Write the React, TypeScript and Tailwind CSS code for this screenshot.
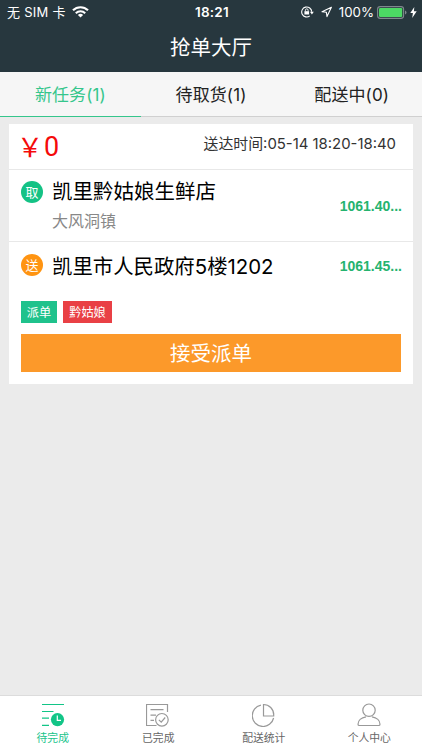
import React from "react";

const GREEN = "#19c48b";

function StatusBar() {
  return (
    <div className="flex h-[24px] items-center pl-[7px] pr-[5px] text-white">
      <div className="flex flex-1 items-center gap-[6px]">
        <span className="text-[13px] leading-6 tracking-[0.25px] whitespace-nowrap">无 SIM 卡</span>
        <svg width="17" height="12" viewBox="0 0 17 12" fill="none" stroke="white">
          <path d="M1 4.3a10.8 10.8 0 0 1 15 0" strokeWidth="2.2" />
          <path d="M3.8 7.2a6.8 6.8 0 0 1 9.4 0" strokeWidth="2.1" />
          <path d="M8.5 11.6 5.9 9a3.8 3.8 0 0 1 5.2 0z" fill="white" stroke="none" />
        </svg>
      </div>
      <span className="text-[13.5px] font-semibold leading-6 tracking-[0.2px]">18:21</span>
      <div className="flex flex-1 items-center justify-end">
        <svg width="13" height="12" viewBox="0 0 13 12" fill="none" stroke="white" strokeWidth="1.1">
          <path d="M10.7 5.8A5 5 0 1 0 8.8 9.9" />
          <path d="M8.9 5.8h3.9l-1.9 2.6z" fill="white" stroke="none" />
          <path d="M3.4 5.2h4.7v3.3H3.4z" fill="white" stroke="none" />
          <path d="M4.4 5.4V4.2a1.35 1.35 0 0 1 2.7 0v1.2" strokeWidth=".9" />
        </svg>
        <svg className="ml-[7px]" width="12" height="12" viewBox="0 0 12 12" fill="none" stroke="white" strokeWidth="1.1">
          <path d="M10.4 1.2 1 5.7l4.4.6.6 4.3z" strokeLinejoin="round" />
        </svg>
        <span className="ml-[6px] text-[13.3px] leading-6">100%</span>
        <svg className="ml-[3px]" width="30" height="13" viewBox="0 0 30 13">
          <rect x=".6" y=".6" width="26" height="11.8" rx="2.6" fill="none" stroke="#7f898d" strokeWidth="1.1" />
          <rect x="2" y="2" width="23.2" height="9" rx="1.2" fill="#4cd964" />
          <path d="M28 4.4q1.5.5 1.5 2.1T28 8.6z" fill="#7f898d" />
        </svg>
        <svg className="ml-[3px]" width="7" height="11" viewBox="0 0 7 11">
          <path d="M4.3 0 .3 6.1h2.6L2.2 11l4.5-6.7H3.9z" fill="white" />
        </svg>
      </div>
    </div>
  );
}

function Tabs() {
  const tabs = ["新任务(1)", "待取货(1)", "配送中(0)"];
  return (
    <div className="flex h-[45px] bg-[#f6f6f6]">
      {tabs.map((label, i) => (
        <div
          key={label}
          className={`flex-1 border-b pt-[10px] text-center text-[17px] leading-[26px] tracking-[0.1px] ${
            i === 0 ? "border-[#35c68c] text-[#35c68c]" : "border-[#d0d0d0] text-[#222]"
          }`}
        >
          {label}
        </div>
      ))}
    </div>
  );
}

function Badge({ label, color }: { label: string; color: string }) {
  return (
    <span
      className={`flex size-[22px] shrink-0 items-center justify-center rounded-full text-[13px] leading-[22px] text-white ${color}`}
    >
      {label}
    </span>
  );
}

function Distance({ value }: { value: string }) {
  return (
    <span className="block font-['Liberation_Sans'] text-[14px] font-bold leading-5 text-[#25b36f]">
      {value}
    </span>
  );
}

function TaskCard() {
  return (
    <section className="mx-[9px] mt-[7px] h-[260px] bg-white">
      <div className="flex h-[46px] justify-between border-b border-[#e8e8e8] pl-[11px] pr-[17px]">
        <span className="flex pt-[4px] text-[27px] leading-[38px] text-[#f50a0a]">
          <span className="-ml-[3px] w-[27px] font-['Noto_Sans_CJK_SC'] text-[26px] leading-[35px]">￥</span>
          <span className="font-['Roboto']">0</span>
        </span>
        <span className="pt-[8px] text-[14.9px] leading-6 text-[#333]">送达时间:05-14 18:20-18:40</span>
      </div>
      <div className="flex h-[72px] border-b border-[#e8e8e8] pl-[12px] pr-[11px]">
        <div className="pt-[11px]">
          <Badge label="取" color="bg-[#14c285]" />
        </div>
        <div className="ml-[9px] pt-[7px]">
          <div className="text-[20.5px] leading-[30px] text-black">凯里黔姑娘生鲜店</div>
          <div className="mt-[2px] text-[16px] leading-6 text-[#888]">大风洞镇</div>
        </div>
        <div className="ml-auto pt-[26px]">
          <Distance value="1061.40..." />
        </div>
      </div>
      <div className="flex h-[59px] pl-[12px] pr-[11px]">
        <div className="pt-[12px]">
          <Badge label="送" color="bg-[#ff9411]" />
        </div>
        <div className="ml-[9px] pt-[10px] text-[20.4px] leading-[30px] text-black">凯里市人民政府5楼1202</div>
        <div className="ml-auto pt-[14px]">
          <Distance value="1061.45..." />
        </div>
      </div>
      <div className="flex gap-[6px] pl-[12px] text-[12.2px] leading-[24px] text-white">
        <span className="h-[22px] w-[36px] bg-[#1fc28c] text-center">派单</span>
        <span className="h-[22px] w-[49px] bg-[#e94045] text-center">黔姑娘</span>
      </div>
      <button className="ml-[12px] mt-[11px] block h-[38px] w-[380px] bg-[#fc992a] text-center text-[20.5px] leading-[40px] text-white">
        接受派单
      </button>
    </section>
  );
}

const pendingIcon = (
  <svg width="24" height="24" viewBox="0 0 24 24" fill="none" stroke="#12c587" strokeWidth="1.2">
    <path d="M1 1.5h22M1 8.5h11.5M1 15.2h7M1 22.4h7" />
    <circle cx="16.5" cy="16.6" r="6.6" fill="#12c587" stroke="none" />
    <path d="M16.3 12.5v4.8h3.7" stroke="white" strokeWidth="1.2" />
  </svg>
);

const doneIcon = (
  <svg width="24" height="24" viewBox="0 0 24 24" fill="none" stroke="#999" strokeWidth="1.2">
    <path d="M21.5 9V1.5h-21v21h10M4.5 6.6h13M4.5 12.2h5.5M4.5 17.4h3.5" />
    <circle cx="15.9" cy="16.8" r="6.3" />
    <path d="m12.9 16.8 2.3 2.3 4-4.6" />
  </svg>
);

const statsIcon = (
  <svg width="24" height="24" viewBox="0 0 24 24" fill="none" stroke="#999" strokeWidth="1.2">
    <path d="M8.9 2.1A10.8 10.8 0 1 0 21.6 15" />
    <path d="M11.5 1.5V13h10.2v-1.2A10.2 10.2 0 0 0 11.5 1.5z" />
  </svg>
);

const profileIcon = (
  <svg width="24" height="24" viewBox="0 0 24 24" fill="none" stroke="#999" strokeWidth="1.2">
    <circle cx="12" cy="7.2" r="6.2" />
    <path d="M9 13.8C4.2 14.6 1 17.7 1 21.2q0 1.3 1.3 1.3h19.4q1.3 0 1.3-1.3c0-3.5-3.2-6.6-8-7.4" />
  </svg>
);

function BottomNav() {
  const items = [
    { label: "待完成", icon: pendingIcon },
    { label: "已完成", icon: doneIcon },
    { label: "配送统计", icon: statsIcon },
    { label: "个人中心", icon: profileIcon },
  ];
  return (
    <nav className="mt-auto flex h-[55px] border-t border-[#dcdcdc] bg-white">
      {items.map((item, i) => (
        <div
          key={item.label}
          className="flex flex-1 flex-col items-center pt-[7px] text-[#666]"
          style={i === 0 ? { color: GREEN } : undefined}
        >
          {item.icon}
          <span className="mt-[4px] text-[10.8px] leading-4">{item.label}</span>
        </div>
      ))}
    </nav>
  );
}

export default function App() {
  return (
    <main className="flex h-[750px] w-[422px] flex-col overflow-hidden bg-[#ebebeb] font-['Inter','Noto_Sans_CJK_SC',sans-serif]">
      <header className="h-[72px] bg-[#27373e]">
        <StatusBar />
        <h1 className="pt-[9px] text-center text-[20.5px] leading-[30px] text-white">抢单大厅</h1>
      </header>
      <Tabs />
      <TaskCard />
      <BottomNav />
    </main>
  );
}
